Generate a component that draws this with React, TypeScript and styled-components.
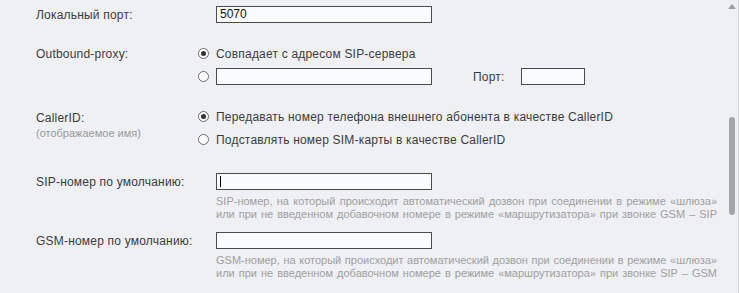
import React from 'react'
import styled, {createGlobalStyle} from 'styled-components'

const GlobalStyle = createGlobalStyle`
  html, body {
    margin: 0;
    padding: 0;
    background: #eef0f3;
  }
  body {
    font-family: "Liberation Sans", Arial, sans-serif;
    font-size: 12px;
    color: #3c3c3c;
  }
`

const Page = styled.div`
  display: flex;
  width: 739px;
  height: 293px;
  overflow: hidden;
  background: #eef0f3;
`

const Content = styled.div`
  flex: 1;
  display: flex;
  flex-direction: column;
  padding-left: 36px;
  letter-spacing: 0.2px;
`

const Row = styled.div<{$top: number}>`
  display: grid;
  grid-template-columns: 162px 1fr;
  margin-top: ${(p) => p.$top}px;
`

const Label = styled.div<{$pad?: number}>`
  padding-top: ${(p) => p.$pad ?? 0}px;
  line-height: 14px;
`

const SubLabel = styled.div`
  color: #9a9a9a;
  font-size: 11px;
  line-height: 14px;
  margin-top: 1px;
  letter-spacing: 0;
`

const Values = styled.div<{$gap?: number}>`
  display: flex;
  flex-direction: column;
  gap: ${(p) => p.$gap ?? 0}px;
`

const Line = styled.div`
  display: flex;
  align-items: center;
  height: 17px;
`

const Indented = styled.div`
  padding-left: 18px;
`

const Field = styled.div<{$width: number}>`
  box-sizing: border-box;
  width: ${(p) => p.$width}px;
  height: 17px;
  border: 1px solid #4a4a4a;
  background: #fafbfd;
  padding: 0 3px;
  line-height: 15px;
  color: #111;
  letter-spacing: 0;
  display: flex;
  align-items: center;
`

const Caret = styled.span`
  display: block;
  width: 1px;
  height: 11px;
  background: #000;
`

const Radio = styled.span<{$checked?: boolean}>`
  box-sizing: border-box;
  width: 11px;
  height: 11px;
  border-radius: 50%;
  border: 1px solid #6d6d6d;
  background: #fff;
  margin-right: 7px;
  display: flex;
  align-items: center;
  justify-content: center;

  &::after {
    content: '';
    width: 5px;
    height: 5px;
    border-radius: 50%;
    background: ${(p) => (p.$checked ? '#333' : 'transparent')};
  }
`

const PortLabel = styled.span`
  margin-left: 41px;
  margin-right: 16px;
`

const Hint = styled.div`
  width: 501px;
  margin-top: 5px;
  color: #a0a0a0;
  font-size: 11px;
  line-height: 13px;
  letter-spacing: 0;
  text-align: justify;
  text-align-last: justify;
`

const ScrollBar = styled.div`
  width: 12px;
  display: flex;
  flex-direction: column;
  align-items: center;
  border-right: 1px solid #d2d5da;
`

const ArrowUp = styled.span`
  margin-top: 4px;
  width: 0;
  height: 0;
  border-left: 4px solid transparent;
  border-right: 4px solid transparent;
  border-bottom: 5px solid #9a9ea4;
`

const Thumb = styled.span`
  margin-top: 108px;
  width: 6px;
  height: 98px;
  border-radius: 3px;
  background: #a2a6ab;
`

export default function App() {
  return (
    <Page>
      <GlobalStyle />
      <Content>
        <Row $top={6}>
          <Label $pad={2}>Локальный порт:</Label>
          <Indented>
            <Field $width={216}>5070</Field>
          </Indented>
        </Row>

        <Row $top={22}>
          <Label $pad={2}>Outbound-proxy:</Label>
          <Values $gap={6}>
            <Line>
              <Radio $checked />
              Совпадает с адресом SIP-сервера
            </Line>
            <Line>
              <Radio />
              <Field $width={216} />
              <PortLabel>Порт:</PortLabel>
              <Field $width={64} />
            </Line>
          </Values>
        </Row>

        <Row $top={23}>
          <div>
            <Label $pad={3}>CallerID:</Label>
            <SubLabel>(отображаемое имя)</SubLabel>
          </div>
          <Values $gap={6}>
            <Line>
              <Radio $checked />
              Передавать номер телефона внешнего абонента в качестве CallerID
            </Line>
            <Line>
              <Radio />
              Подставлять номер SIM-карты в качестве CallerID
            </Line>
          </Values>
        </Row>

        <Row $top={25}>
          <Label $pad={2}>SIP-номер по умолчанию:</Label>
          <Indented>
            <Field $width={216}>
              <Caret />
            </Field>
            <Hint>
              SIP-номер, на который происходит автоматический дозвон при соединении в режиме «шлюза» или при не введенном
              добавочном номере в режиме «маршрутизатора» при звонке GSM – SIP
            </Hint>
          </Indented>
        </Row>

        <Row $top={11}>
          <Label $pad={2}>GSM-номер по умолчанию:</Label>
          <Indented>
            <Field $width={216} />
            <Hint>
              GSM-номер, на который происходит автоматический дозвон при соединении в режиме «шлюза» или при не введенном
              добавочном номере в режиме «маршрутизатора» при звонке SIP – GSM
            </Hint>
          </Indented>
        </Row>
      </Content>
      <ScrollBar>
        <ArrowUp />
        <Thumb />
      </ScrollBar>
    </Page>
  )
}
